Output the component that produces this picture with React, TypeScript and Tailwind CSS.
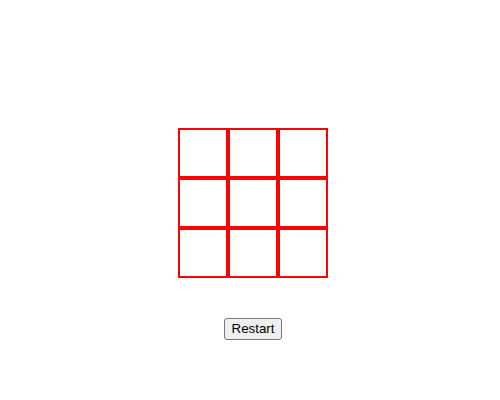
import { useState } from "react";

export default function App() {
  const [cells, setCells] = useState<string[]>(Array(9).fill(""));

  return (
    <div className="w-[500px] h-[400px] bg-white flex flex-col items-center pt-[128px] pl-[6px] font-['Liberation_Sans',Arial,sans-serif]">
      {/* Board */}
      <div className="grid grid-cols-[repeat(3,50px)] grid-rows-[repeat(3,50px)]">
        {cells.map((c, i) => (
          <div
            key={i}
            className="w-[50px] h-[50px] border-2 border-[#ff0000] box-border flex items-center justify-center text-2xl"
          >
            {c}
          </div>
        ))}
      </div>

      <button
        onClick={() => setCells(Array(9).fill(""))}
        className="mt-[40px] px-[7px] py-[2px] text-[13.333px] leading-[16px] text-black bg-[#efefef] border border-[#767676] rounded-[3px]"
      >
        Restart
      </button>
    </div>
  );
}
